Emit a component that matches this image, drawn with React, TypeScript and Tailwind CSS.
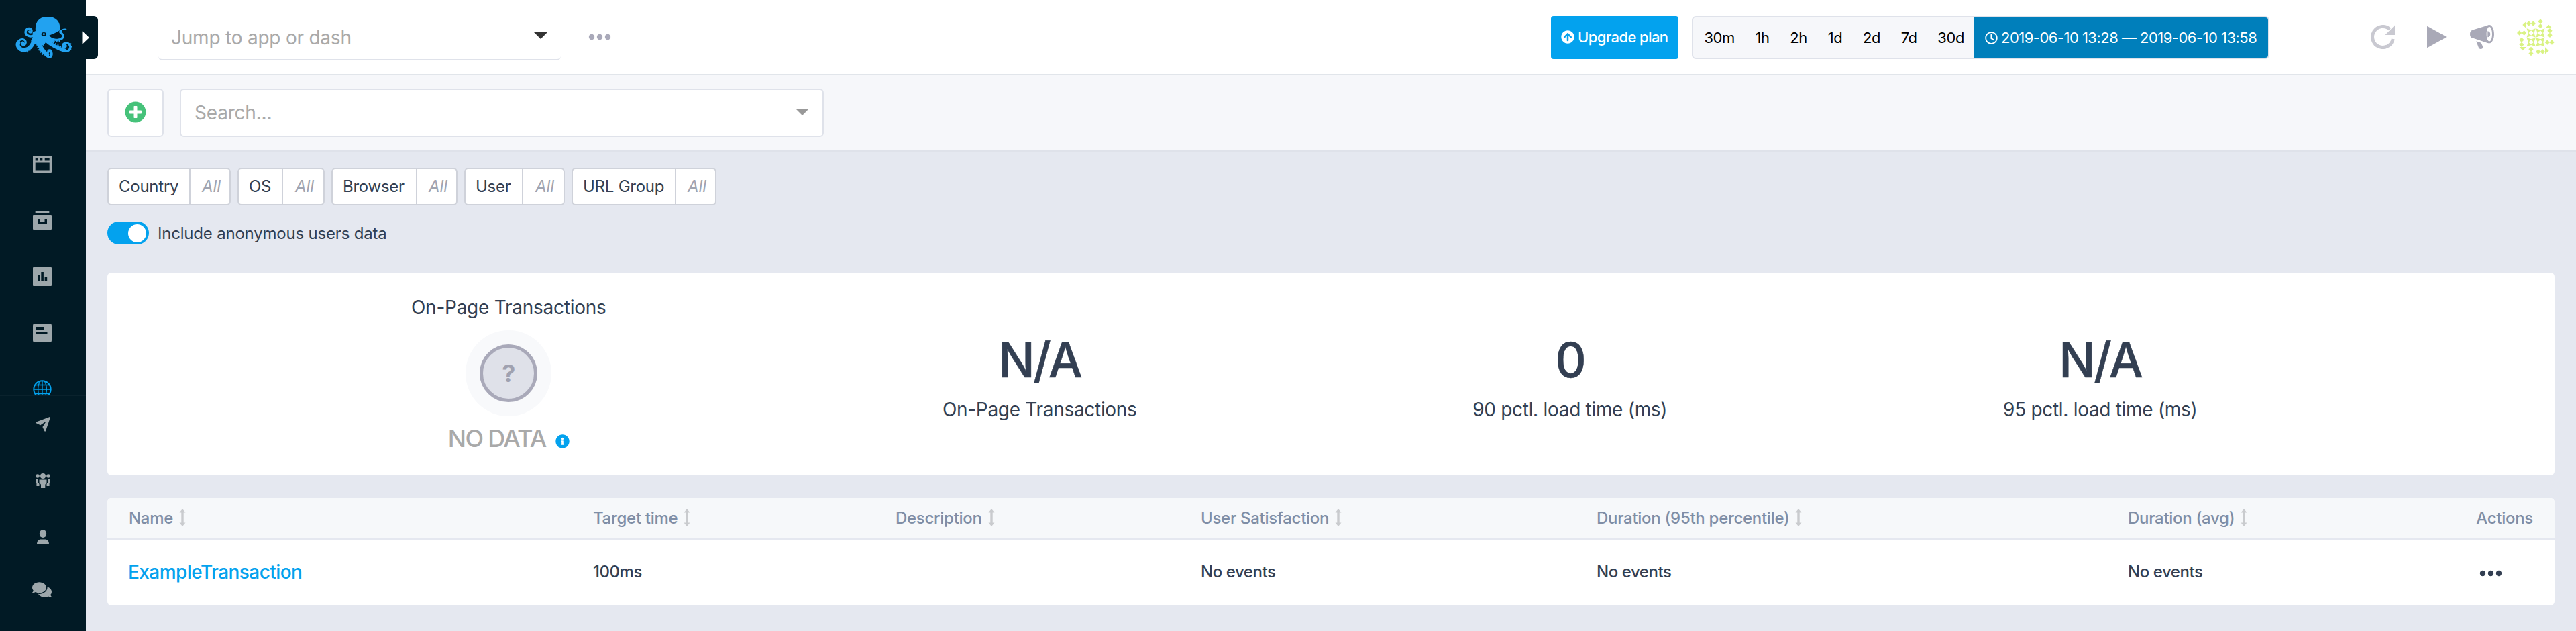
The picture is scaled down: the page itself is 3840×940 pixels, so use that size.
import React from "react";
import { FaPlusCircle, FaInfoCircle, FaArrowCircleUp, FaRegClock, FaComments } from "react-icons/fa";

function Octopus() {
  return (
    <svg viewBox="0 0 300 228" className="h-[76px] w-[100px]" fill="none" stroke="#22a2f0" strokeLinecap="round" strokeLinejoin="round">
      <path stroke="none" fill="#22a2f0" d="M111 84C108 48 124 21 162 21C204 20 222 42 221 80C206 92 188 96 172 104C178 112 186 116 198 120L190 134L160 130L146 150L122 140L106 142L90 130L98 112L98 90Z" />
      <path strokeWidth="10" d="M104 104C84 114 62 102 67 84C72 70 92 70 93 83C93 91 84 92 83 87" />
      <path strokeWidth="18" d="M110 118C98 142 88 166 64 169C38 171 27 150 34 136" />
      <path strokeWidth="9" d="M31 139C38 114 68 118 67 136C64 151 48 149 49 139C50 134 56 134 57 138" />
      <path strokeWidth="20" d="M124 134C130 156 146 180 162 190" />
      <path strokeWidth="11" d="M158 192C176 212 186 196 181 178C179 168 168 170 168 178" />
      <path strokeWidth="17" d="M152 122C176 142 208 162 240 171" />
      <path strokeWidth="10" d="M238 174C262 180 274 158 261 143C250 132 230 140 234 153C239 162 250 154 245 148" />
      <path strokeWidth="10" d="M172 118C200 128 232 126 234 108C235 92 214 92 224 84" />
      <path strokeWidth="4" d="M222 86C228 76 238 75 248 76" />
      <path strokeWidth="7" strokeDasharray="0.1 12" d="M182 128C196 134 210 132 222 128M190 136C206 144 222 154 234 160M268 142C272 154 270 164 264 172M118 146C122 164 134 182 148 194M92 160C88 168 82 174 74 178" />
      <ellipse cx="148" cy="99" rx="11" ry="9" fill="#011a25" stroke="none" />
      <ellipse cx="148" cy="98" rx="5" ry="4" fill="#22a2f0" stroke="none" />
    </svg>
  );
}

const WindowIcon = () => (
  <svg viewBox="0 0 28 25" className="h-[25px] w-7" fill="currentColor">
    <path fillRule="evenodd" d="M1 0h26a1 1 0 0 1 1 1v23a1 1 0 0 1-1 1H1a1 1 0 0 1-1-1V1a1 1 0 0 1 1-1ZM3.700 3.500v4h3.600v-4ZM10.700 3.500v4h3.600v-4ZM17.700 3.500v4h7v-4ZM3.700 10.500v11h21v-11Z" />
  </svg>
);
const ArchiveIcon = () => (
  <svg viewBox="0 0 28 28" className="size-7" fill="currentColor">
    <rect x="3.500" y="0" width="21" height="4" rx="2" />
    <path fillRule="evenodd" d="M1 7h26a1 1 0 0 1 1 1v19a1 1 0 0 1-1 1H1a1 1 0 0 1-1-1V8a1 1 0 0 1 1-1ZM7 12v7.500h14V12h-3.500v4h-7v-4Z" />
  </svg>
);
const ChartIcon = () => (
  <svg viewBox="0 0 28 28" className="size-7" fill="currentColor">
    <path fillRule="evenodd" d="M1 0h26a1 1 0 0 1 1 1v26a1 1 0 0 1-1 1H1a1 1 0 0 1-1-1V1a1 1 0 0 1 1-1ZM7 12v9h3.500v-9ZM12.300 7v14h3.600V7ZM17.600 14v7h3.600v-7Z" />
  </svg>
);
const NoteIcon = () => (
  <svg viewBox="0 0 28 28" className="size-7" fill="currentColor">
    <path fillRule="evenodd" d="M3 0h22a3 3 0 0 1 3 3v22a3 3 0 0 1-3 3H3a3 3 0 0 1-3-3V3a3 3 0 0 1 3-3ZM5 5v4h11V5ZM5 12v4h16.500v-4Z" />
  </svg>
);
const GlobeIcon = () => (
  <svg viewBox="0 0 28 28" className="size-7" fill="none" stroke="#03a2ee">
    <circle cx="14" cy="14" r="12.700" strokeWidth="2" />
    <path strokeWidth="1.300" d="M14 1v26M1 14h26M3 7.500h22M3 20.500h22M11 1.500C6.500 8 6.500 20 11 26.500M17 1.500C21.500 8 21.500 20 17 26.500" />
  </svg>
);
const PlaneIcon = () => (
  <svg viewBox="0 0 22 22" className="size-[22px]" fill="currentColor">
    <path d="M20.500.200c1-.3 1.400.2 1.200 1.200L15 21c-.4 1-1.400 1-1.800 0L10.400 15 16 6.300 7.200 12.200.900 9.200C0 8.700 0 8 .900 7.500Z" />
  </svg>
);
const GroupIcon = () => (
  <svg viewBox="0 0 22 22" className="size-[22px]" fill="currentColor">
    <circle cx="11" cy="4" r="4" />
    <circle cx="3" cy="4" r="2.800" />
    <circle cx="19" cy="4" r="2.800" />
    <path d="M5.500 9.500h11v4.300l-2.200 3V22H8v-5.200l-2.500-3ZM0 8.300h3.900v5.400l1.600 2V19H1.400v-4.600L0 13.500ZM22 8.300h-3.900v5.400l-1.600 2V19h4.100v-4.600l1.400-.9Z" />
  </svg>
);
const PersonIcon = () => (
  <svg viewBox="0 0 18 22" className="h-[22px] w-[18px]" fill="currentColor">
    <ellipse cx="9" cy="6" rx="5.200" ry="6" />
    <path d="M0 21.500c0-4.500 2.500-7 6-7h6c3.500 0 6 2.500 6 7Z" />
  </svg>
);

function Sidebar() {
  return (
    <aside className="relative z-10 flex h-[940px] w-32 shrink-0 flex-col bg-[#011a25] text-[#9da7ab]">
      <div className="h-[202px] pt-[18px] pl-4">
        <Octopus />
      </div>
      <nav className="flex h-[388px] flex-col overflow-hidden border-b-2 border-[#0a222d]">
        {[WindowIcon, ArchiveIcon, ChartIcon, NoteIcon, GlobeIcon].map((Icon, i) => (
          <a key={i} className="flex h-[84px] shrink-0 items-center justify-center pr-0.5">
            <Icon />
          </a>
        ))}
      </nav>
      <nav className="flex flex-col">
        {[PlaneIcon, GroupIcon, PersonIcon].map((Icon, i) => (
          <a key={i} className="flex h-[84px] items-center justify-center pr-px">
            <Icon />
          </a>
        ))}
        <a className="flex h-[72px] items-center justify-center pr-1">
          <FaComments className="size-[29px]" />
        </a>
      </nav>
      <button className="absolute top-6 left-[122px] flex h-16 w-6 items-center rounded-r-md bg-[#011a25]">
        <svg viewBox="0 0 12 20" className="h-5 w-3" fill="#fff">
          <path d="M.500 1.500Q.500 0 1.500 1L11 10 1.500 19Q.500 20 .500 18.500Z" />
        </svg>
      </button>
    </aside>
  );
}

const diamonds: [number, number][] = [
  [89, 60], [109, 60], [141, 51], [141, 71], [183, 92], [183, 112], [172, 144], [192, 144],
  [151, 186], [131, 186], [99, 194], [99, 175], [57, 154], [57, 133], [68, 102], [47, 102],
];
const cells: [number, number][] = [[99.500, 102], [140.500, 102], [99.500, 143], [140.500, 143]];

function Avatar() {
  return (
    <svg viewBox="0 0 240 240" className="size-20" fill="#d9f283">
      {diamonds.map(([x, y], i) => (
        <path key={i} d={`M${x} ${y - 11}L${x + 11} ${y}L${x} ${y + 11}L${x - 11} ${y}Z`} />
      ))}
      <path d="M78 50V82L61 66ZM163 81L178 65L193 81ZM162 166V196L179 182ZM47 165H78L62 181Z" />
      {cells.map(([x, y], i) => (
        <path
          key={i}
          fillRule="evenodd"
          d={`M${x - 20} ${y - 20}L${x} ${y - 13}L${x + 20} ${y - 20}L${x + 13} ${y}L${x + 20} ${y + 20}L${x} ${y + 13}L${x - 20} ${y + 20}L${x - 13} ${y}ZM${x} ${y - 11}L${x + 11} ${y}L${x} ${y + 11}L${x - 11} ${y}Z`}
        />
      ))}
    </svg>
  );
}

const Caret = ({ className }: { className: string }) => (
  <svg viewBox="0 0 20 10" className={`h-2.5 w-5 ${className}`} fill="currentColor">
    <path d="M0 0h20L10 10Z" />
  </svg>
);

const Dots = ({ className }: { className: string }) => (
  <svg viewBox="0 0 34 10" className={`h-2.5 w-[34px] ${className}`} fill="currentColor">
    <circle cx="5" cy="5" r="4.200" />
    <circle cx="17" cy="5" r="4.200" />
    <circle cx="29" cy="5" r="4.200" />
  </svg>
);

function TopBar() {
  return (
    <header className="flex h-28 items-start border-b-2 border-[#e1e5ea] bg-white">
      <div className="ml-[108px] flex h-[90px] w-[600px] items-center justify-between rounded-md border-b-2 border-[#dfe2ea] pt-6 pr-5 pl-[19px]">
        <span className="text-[28px] tracking-[-0.22px] text-[#a9a9a9]">Jump to app or dash</span>
        <Caret className="mb-1.5 text-[#333]" />
      </div>
      <Dots className="mt-[50px] ml-[41px] text-[#a9a9b9]" />
      <div className="ml-auto flex pt-6">
        <button className="flex h-16 w-[190px] items-center rounded bg-[#03a2ee] pb-0.5 pl-[15px] text-[22px] font-medium tracking-[-0.6px] text-white">
          <FaArrowCircleUp className="mr-[5px] size-5" />
          Upgrade plan
        </button>
        <div className="ml-5 flex h-16 w-[861px] overflow-hidden rounded-md border-2 border-[#dfe2ea] bg-[#f6f7fa] text-[22px] tracking-[-0.46px] text-black">
          <div className="flex w-[418px] items-center pt-px pl-px">
            {["30m", "1h", "2h", "1d", "2d", "7d", "30d"].map((t) => (
              <span key={t} className="px-[15.400px]">{t}</span>
            ))}
          </div>
          <div className="flex flex-1 items-center bg-[#007fbb] pt-px pl-[17px] tracking-[-0.520px] whitespace-nowrap text-white">
            <FaRegClock className="mr-[5px] size-[19px]" />
            2019-06-10 13:28 — 2019-06-10 13:58
          </div>
        </div>
      </div>
      <div className="ml-[151px] flex text-[#a9a9b7]">
        <svg viewBox="0 0 36 36" className="mt-[37px] size-9" fill="none" stroke="#c9c9d1" strokeWidth="5">
          <path d="M33.300 21A15.500 15.500 0 1 1 28.500 6.500" />
          <path fill="#c9c9d1" stroke="none" d="M36 .500V15H21.500Z" />
        </svg>
        <svg viewBox="0 0 29 32" className="mt-[39px] ml-12 h-8 w-[29px]" fill="currentColor">
          <path d="M0 .500Q0-.300 1 .300L28 15.300Q29 16 28 16.700L1 31.700Q0 32.300 0 31.500Z" />
        </svg>
        <svg viewBox="0 0 108 108" className="mt-[37px] ml-[35px] size-9" fill="currentColor">
          <path fillRule="evenodd" d="M86 0C99 0 108 19 108 41S99 82 86 82C83 82 80 81 77 80L10 58C3 56 0 50 0 41S3 26 10 23L77 3C80 1 83 0 86 0ZM87 9C79 9 74 24 74 41S79 73 87 73S99 58 99 41S94 9 87 9Z" />
          <path d="M79 28C86 29 91 34 91 41S86 54 79 55ZM28 73L50 80C54 90 58 96 58 100C58 105 54 108 48 108C43 108 40 105 38 100Z" />
        </svg>
        <div className="mt-[15px] mr-5 ml-[22px]">
          <Avatar />
        </div>
      </div>
    </header>
  );
}

function SearchBar() {
  return (
    <div className="flex h-[114px] gap-6 border-b-2 border-[#dfe2ea] bg-[#f6f7fa] px-8 pt-5">
      <button className="flex h-[72px] w-[84px] items-center justify-center rounded-md border-2 border-[#dfe2ea] bg-white pb-0.5">
        <FaPlusCircle className="size-8 text-[#46c27a]" />
      </button>
      <div className="flex h-[72px] w-[960px] items-center justify-between rounded-md border-2 border-[#dfe2ea] bg-white pr-5 pl-5">
        <span className="text-[28px] tracking-[-0.200px] text-[#a9a9a9]">Search...</span>
        <Caret className="mb-0.5 text-[#999]" />
      </div>
    </div>
  );
}

const filters = [
  { label: "Country", labelWidth: "w-[120px]", valueWidth: "w-[60px]" },
  { label: "OS", labelWidth: "w-16", valueWidth: "w-[62px]" },
  { label: "Browser", labelWidth: "w-[124px]", valueWidth: "w-[60px]" },
  { label: "User", labelWidth: "w-[84px]", valueWidth: "w-[62px]" },
  { label: "URL Group", labelWidth: "w-[152px]", valueWidth: "w-[60px]" },
];

function Filters() {
  return (
    <div className="flex gap-2.5">
      {filters.map((f) => (
        <div key={f.label} className="flex h-14 items-stretch rounded-md border-2 border-[#cfd2da] bg-white text-2xl leading-[51px]">
          <span className={`pl-[15px] tracking-[-0.250px] whitespace-nowrap ${f.labelWidth}`}>{f.label}</span>
          <span className={`border-l-2 border-[#cfd2da] pl-1 text-center text-[#a0a4b0] italic ${f.valueWidth}`}>All</span>
        </div>
      ))}
    </div>
  );
}

function Stat({ value, label }: { value: string; label: string }) {
  return (
    <div className="flex w-[790.500px] flex-col items-center pt-[90px] pl-0.5">
      <span className="text-[72px] leading-[80px] font-medium tracking-[-2.500px] [-webkit-text-stroke:0.5px_#333f52]">{value}</span>
      <span className="mt-[14px] text-[28px] leading-10 tracking-[-0.300px]">{label}</span>
    </div>
  );
}

function Summary() {
  return (
    <section className="mt-[42px] flex h-[302px] rounded-md bg-white pl-[203px]">
      <div className="flex w-[790.500px] flex-col items-center pt-8">
        <span className="text-[28px] leading-10 tracking-[-0.250px]">On-Page Transactions</span>
        <div className="mt-3.5 flex size-32 items-center justify-center rounded-full bg-[#f8f9fb]">
          <div className="flex size-[86px] items-center justify-center rounded-full border-[5px] border-[#a9a9b9] bg-[#dfe1e9] text-4xl leading-9 font-bold text-[#a0a1b0]">
            ?
          </div>
        </div>
        <div className="mt-3 flex items-center text-4xl leading-[42px] font-medium tracking-[-1.650px] text-[#a9a9a9]">
          NO DATA
          <FaInfoCircle className="mt-[9px] ml-3.5 size-[21px] text-[#03a2ee]" />
        </div>
      </div>
      <Stat value="N/A" label="On-Page Transactions" />
      <Stat value="0" label="90 pctl. load time (ms)" />
      <Stat value="N/A" label="95 pctl. load time (ms)" />
    </section>
  );
}

const columns = ["Name", "Target time", "Description", "User Satisfaction", "Duration (95th percentile)", "Duration (avg)"];

const grid = "grid grid-cols-[692px_451px_455px_590px_792px_1fr] items-center pl-8";

const SortIcon = () => (
  <svg viewBox="0 0 10 26" className="mb-0.5 ml-[9px] h-[26px] w-2.5" fill="#c9cbce">
    <path d="M5 0L9.500 5.500H6.700V20.500H9.500L5 26L.500 20.500H3.300V5.500H.500Z" />
  </svg>
);

function Transactions() {
  return (
    <section className="mt-[34px] overflow-hidden rounded-md bg-white text-2xl font-medium">
      <div className={`h-[62px] border-b-2 border-[#e5e8f0] bg-[#f6f8fa] tracking-[-0.290px] text-[#7f8ea6] ${grid}`}>
        {columns.slice(0, 5).map((c) => (
          <div key={c} className="flex items-center whitespace-nowrap">
            {c}
            <SortIcon />
          </div>
        ))}
        <div className="flex items-center justify-between pr-8">
          <div className="flex items-center">
            {columns[5]}
            <SortIcon />
          </div>
          Actions
        </div>
      </div>
      <div className={`h-[98px] pb-0.5 tracking-[-0.450px] ${grid}`}>
        <a className="-ml-px pt-0.5 text-[28px] tracking-[-0.560px] text-[#03a2ee]">ExampleTransaction</a>
        <span>100ms</span>
        <span />
        <span>No events</span>
        <span>No events</span>
        <div className="flex items-center justify-between pr-[78px]">
          No events
          <Dots className="mt-[3px] text-[#333f52]" />
        </div>
      </div>
    </section>
  );
}

export default function App() {
  return (
    <div className="flex h-[940px] w-[3840px] overflow-hidden bg-[#e5e8f0] font-['Inter',sans-serif] text-[#333f52]">
      <Sidebar />
      <main className="flex-1">
        <TopBar />
        <SearchBar />
        <div className="px-8 pt-6">
          <Filters />
          <div className="mt-6 flex h-[34px] items-center">
            <div className="flex h-[34px] w-[62px] items-center justify-end rounded-full bg-[#03a2ee] pr-1">
              <div className="size-[27px] rounded-full bg-white" />
            </div>
            <span className="ml-[13px] pt-px text-2xl tracking-[-0.200px]">Include anonymous users data</span>
          </div>
          <Summary />
          <Transactions />
        </div>
      </main>
    </div>
  );
}
